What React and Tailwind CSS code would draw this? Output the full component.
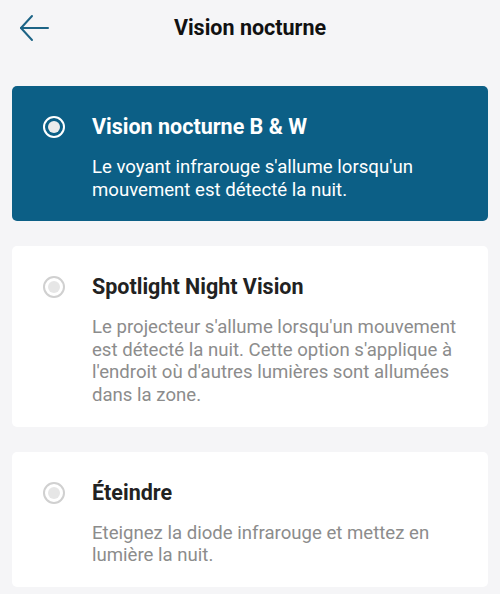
import React, { useState } from 'react';

const options = [
  {
    id: 'bw',
    title: 'Vision nocturne B & W',
    description: "Le voyant infrarouge s'allume lorsqu'un mouvement est détecté la nuit.",
  },
  {
    id: 'spotlight',
    title: 'Spotlight Night Vision',
    description:
      "Le projecteur s'allume lorsqu'un mouvement est détecté la nuit. Cette option s'applique à l'endroit où d'autres lumières sont allumées dans la zone.",
  },
  {
    id: 'off',
    title: 'Éteindre',
    description: 'Eteignez la diode infrarouge et mettez en lumière la nuit.',
  },
];

function Radio({ checked }) {
  return (
    <div
      className={`flex h-[22px] w-[22px] shrink-0 items-center justify-center rounded-full border-2 ${
        checked ? 'border-white' : 'border-[#d0d0d0]'
      }`}
    >
      <div className={`h-[12px] w-[12px] rounded-full ${checked ? 'bg-[#ececec]' : 'bg-[#e6e6e6]'}`} />
    </div>
  );
}

export default function App() {
  const [selected, setSelected] = useState('bw');

  return (
    <div className="min-h-[594px] bg-[#f5f5f7] font-['Roboto',sans-serif]">
      <div className="relative flex h-[56px] items-center justify-center">
        <button className="absolute left-[18px] top-[14px] text-[#1d6486]">
          <svg width="32" height="28" viewBox="0 0 32 28" fill="none" stroke="currentColor" strokeWidth="2" strokeLinecap="round" strokeLinejoin="round">
            <path d="M30 14H3" />
            <path d="M14 2L3 14l11 12" />
          </svg>
        </button>
        <h1 className="text-[21.5px] font-bold text-[#111]">Vision nocturne</h1>
      </div>

      <div className="flex flex-col gap-[25px] px-[12px] pt-[30px]">
        {options.map((opt) => {
          const active = selected === opt.id;
          return (
            <div
              key={opt.id}
              onClick={() => setSelected(opt.id)}
              className={`flex cursor-pointer gap-[27px] rounded-[5px] pl-[31px] pr-[20px] pt-[27px] pb-[20px] ${
                active ? 'bg-[#0c5f86]' : 'bg-white'
              }`}
            >
              <div className="pt-[3px]">
                <Radio checked={active} />
              </div>
              <div>
                <div className={`text-[21.5px] font-bold leading-[28px] ${active ? 'text-white' : 'text-[#222]'}`}>
                  {opt.title}
                </div>
                <p className={`mt-[15px] text-[18.6px] leading-[22.6px] ${active ? 'text-white' : 'text-[#8c8c8c]'}`}>
                  {opt.description}
                </p>
              </div>
            </div>
          );
        })}
      </div>
    </div>
  );
}
